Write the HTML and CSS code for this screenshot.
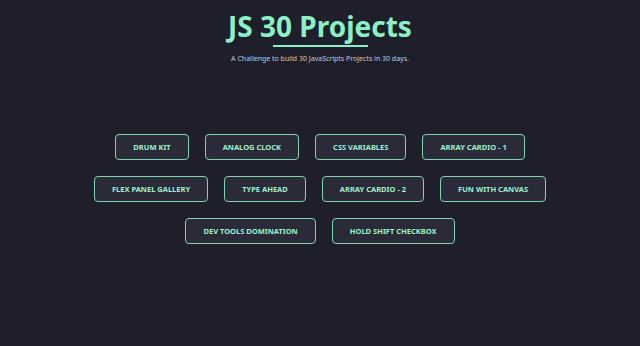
FILE: index.html
```html
<!DOCTYPE html>
<html lang="en">
<head>
    <meta charset="UTF-8">
    <meta name="viewport" content="width=device-width, initial-scale=1.0">
    <title>JS 30 Projects</title>
    <link rel="stylesheet" href="styles.css">
</head>
<body>
    <header>
        <h1>JS 30 Projects</h1>
        <div class="underline"></div>
        <p class="subtitle">A Challenge to build 30 JavaScripts Projects in 30 days.</p>
    </header>

    <main class="projects">
        <a class="project" href="#">Drum Kit</a>
        <a class="project" href="#">Analog Clock</a>
        <a class="project" href="#">CSS Variables</a>
        <a class="project" href="#">Array Cardio - 1</a>
        <a class="project" href="#">Flex Panel Gallery</a>
        <a class="project" href="#">Type Ahead</a>
        <a class="project" href="#">Array Cardio - 2</a>
        <a class="project" href="#">Fun with Canvas</a>
        <a class="project" href="#">Dev Tools Domination</a>
        <a class="project" href="#">Hold Shift Checkbox</a>
    </main>
</body>
</html>
```

FILE: styles.css
```css
body {
    margin: 0;
    padding: 0;
    background-color: #1f1f2c;
    font-family: 'Noto Sans', sans-serif;
    color: #d0d0d8;
}
header {
    text-align: center;
    padding-top: 8px;
}
h1 {
    margin: 0;
    font-size: 28px;
    line-height: 36px;
    font-weight: 700;
    color: #8cf0c6;
}
.underline {
    width: 95px;
    height: 2px;
    margin: 1px auto 0;
    background-color: #8cf0c6;
}
.subtitle {
    margin: 7px 0 0;
    font-size: 7px;
    line-height: 10px;
    color: #c8c8d2;
}
.projects {
    max-width: 500px;
    margin: 70px auto 0;
    display: flex;
    flex-wrap: wrap;
    justify-content: center;
    gap: 16px;
}
.project {
    display: flex;
    align-items: center;
    height: 24px;
    padding: 0 17px;
    border: 1.5px solid #7fd3b0;
    border-radius: 4px;
    background-color: #2a2a38;
    color: #9ff0cc;
    font-size: 7.5px;
    font-weight: 700;
    text-transform: uppercase;
    text-decoration: none;
}
```
